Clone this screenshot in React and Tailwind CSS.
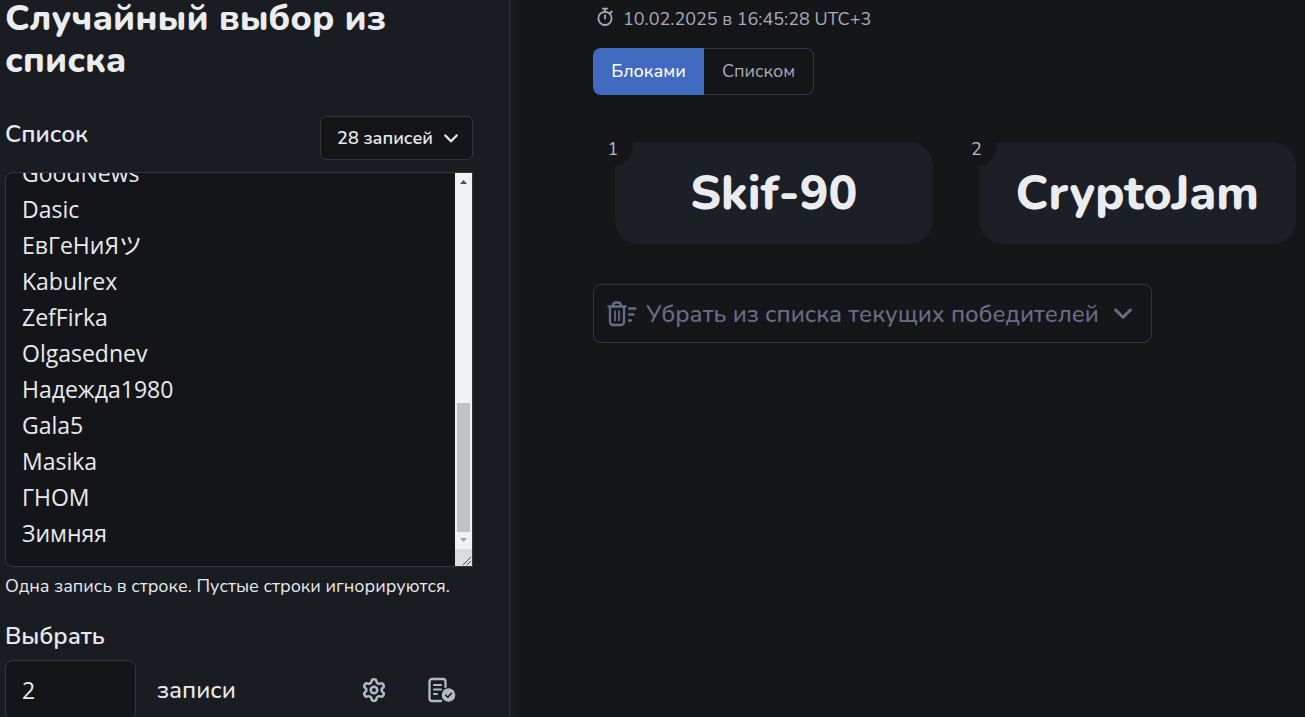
import { useEffect, useRef, useState } from "react"
import { Settings } from "lucide-react"

const names = [
    "GoodNews",
    "Dasic",
    "ЕвГеНиЯツ",
    "Kabulrex",
    "ZefFirka",
    "Olgasednev",
    "Надежда1980",
    "Gala5",
    "Masika",
    "ГНОМ",
    "Зимняя",
]

const winners = ["Skif-90", "CryptoJam"]

function Chevron({ className }) {
    return (
        <svg className={className} viewBox="0 0 14 9" fill="none" stroke="currentColor" strokeWidth="2.3" strokeLinecap="round" strokeLinejoin="round">
            <path d="M1.300 1.500L7 7.200l5.700-5.700" />
        </svg>
    )
}

function StopwatchIcon() {
    return (
        <svg width="18" height="20" viewBox="0 0 18 20" fill="none" stroke="currentColor" strokeWidth="1.8" strokeLinecap="round">
            <circle cx="9" cy="11.4" r="6.6" />
            <path d="M9 8.200v3.400M6.800 1.600h4.400M9 1.800v2.600M14.200 6l1.600-1.500" />
        </svg>
    )
}

function ListCheckIcon() {
    return (
        <svg width="28" height="26" viewBox="0 0 28 26" fill="none">
            <path
                d="M17.500 10V4.500a2.500 2.500 0 0 0-2.500-2.500H4A2.500 2.500 0 0 0 1.500 4.500v17A2.500 2.500 0 0 0 4 24h9"
                stroke="currentColor"
                strokeWidth="2.300"
                strokeLinecap="round"
            />
            <path d="M6 8h7M6 12.500h7M6 17h3" stroke="currentColor" strokeWidth="2.200" strokeLinecap="round" />
            <circle cx="20.500" cy="18" r="6.800" fill="currentColor" />
            <path d="M17.800 18.200l2 2 3.500-3.800" stroke="#191c20" strokeWidth="1.600" strokeLinecap="round" strokeLinejoin="round" />
        </svg>
    )
}

function TrashListIcon() {
    return (
        <svg width="30" height="26" viewBox="0 0 30 26" fill="none" stroke="currentColor" strokeWidth="2.3" strokeLinecap="round" strokeLinejoin="round">
            <path d="M1.500 5.500h17M3 5.500V21a3 3 0 0 0 3 3h8a3 3 0 0 0 3-3V5.500" />
            <path d="M5.800 5c.4-2.300 1.400-3.500 3-3.500h2.400c1.600 0 2.600 1.200 3 3.500" />
            <path d="M8 10v9.500M12 10v9.500" strokeWidth="1.700" />
            <path d="M22 7.500h6.500M22 13.500h4.500M22 19.500h2" />
        </svg>
    )
}

function Scrollbar() {
    return (
        <div aria-hidden="true" className="flex w-[17px] shrink-0 flex-col bg-[#f1f1f1]">
            <svg width="17" height="17" viewBox="0 0 17 17">
                <path d="M5 11l3.500-4 3.500 4z" fill="#505050" />
            </svg>
            <div className="flex-[213]" />
            <div className="mx-0.5 flex-[129] bg-[#c1c3c2]" />
            <svg width="17" height="17" viewBox="0 0 17 17">
                <path d="M5 6l3.500 4L12 6z" fill="#a3a3a3" />
            </svg>
            <svg width="17" height="17" viewBox="0 0 17 17">
                <path d="M0 0h17v17H0z" fill="#dcdcdc" />
                <path d="M8 16l8-8M12 16l4-4" stroke="#505050" />
            </svg>
        </div>
    )
}

function Sidebar() {
    const [list, setList] = useState(names.join("\n"))
    const [count, setCount] = useState(2)
    const listRef = useRef(null)

    useEffect(() => {
        listRef.current.scrollTop = listRef.current.scrollHeight
    }, [])

    return (
        <aside className="w-[510px] shrink-0 border-r border-[#2c3035] bg-[#191c20] pl-[5px] pr-9">
            <h1 className="-mt-0.5 text-4xl font-extrabold leading-[42px] text-[#ebecf0]">Случайный выбор из списка</h1>

            <div className="mt-[34px] flex items-center justify-between">
                <label htmlFor="list" className="pb-2 text-2xl font-semibold">Список</label>
                <button className="flex h-11 items-center gap-[11px] rounded-md border border-[#33373c] bg-[#141519] pl-4 pr-3.5 text-lg font-semibold">
                    28 записей
                    <Chevron className="w-3.5" />
                </button>
            </div>

            <div className="mt-3 flex h-[395px] overflow-hidden rounded-l-lg border border-[#33373c] bg-[#141519]">
                <textarea
                    id="list"
                    ref={listRef}
                    value={list}
                    onChange={(e) => setList(e.target.value)}
                    spellCheck={false}
                    className="min-w-0 flex-1 resize-none overflow-y-auto bg-transparent px-4 py-[15px] font-['Open_Sans','Noto_Sans_CJK_JP',sans-serif] text-[23px] leading-9 outline-none [scrollbar-width:none]"
                />
                <Scrollbar />
            </div>
            <p className="mt-1.5 whitespace-nowrap text-lg leading-[26px]">Одна запись в строке. Пустые строки игнорируются.</p>

            <label htmlFor="count" className="mt-[21px] block text-2xl leading-8 font-semibold">Выбрать</label>
            <div className="mt-2 flex items-center">
                <input
                    id="count"
                    type="number"
                    value={count}
                    onChange={(e) => setCount(e.target.value)}
                    className="h-[60px] w-[131px] rounded-lg border border-[#33373c] bg-[#141519] px-4 font-['Open_Sans',sans-serif] text-[23px] outline-none [appearance:textfield]"
                />
                <span className="ml-[21px] text-2xl font-medium">записи</span>
                <div className="ml-auto flex gap-[41px] pr-[17px] text-[#b4b9c6]">
                    <button aria-label="Настройки"><Settings size={26} strokeWidth={2.3} /></button>
                    <button aria-label="Проверить список"><ListCheckIcon /></button>
                </div>
            </div>
        </aside>
    )
}

function App() {
    const [view, setView] = useState("blocks")

    return (
        <div className="flex h-screen overflow-hidden bg-[#14161a] font-['Nunito','Open_Sans',sans-serif] text-[#e8eaee]">
            <Sidebar />
            <div className="w-3 shrink-0 bg-linear-to-r from-[#1b1c20] to-[#14161a]" />
            <main className="min-w-0 flex-1 pl-[71px] pr-[9px] pt-[5px]">
                <div className="flex h-7 items-center gap-[9px] text-lg text-[#a9adb6]">
                    <span className="pb-1 pl-[3px]"><StopwatchIcon /></span>
                    <time dateTime="2025-02-10T16:45:28+03:00">10.02.2025 в 16:45:28 UTC+3</time>
                </div>

                <div className="mt-[15px] flex h-[47px] w-fit text-lg">
                    <button
                        aria-pressed={view === "blocks"}
                        onClick={() => setView("blocks")}
                        className="w-[111px] rounded-l-lg bg-[#4069c0] pb-0.5 font-medium text-white"
                    >
                        Блоками
                    </button>
                    <button
                        aria-pressed={view === "list"}
                        onClick={() => setView("list")}
                        className="w-[110px] rounded-r-lg border border-l-0 border-[#33373c] pb-0.5 text-[#a9adb6]"
                    >
                        Списком
                    </button>
                </div>

                <ol className="ml-[22px] mt-[47px] grid grid-cols-2 gap-[46px]">
                    {winners.map((name, i) => (
                        <li key={name} className="relative flex h-[102px] items-center justify-center rounded-3xl bg-[#1c1f26]">
                            <span className="absolute -left-[22px] -top-4 flex size-10 items-end justify-center rounded-full bg-[#14161a] pb-[3px] text-lg text-[#b4b9c6]">
                                {i + 1}
                            </span>
                            <span className="text-5xl font-extrabold text-[#ebecf0]">{name}</span>
                        </li>
                    ))}
                </ol>

                <button className="mt-10 flex h-[59px] items-center gap-[9px] whitespace-nowrap rounded-lg border border-[#33373c] pl-[13px] pr-[19px] text-2xl font-medium text-[#666e84]">
                    <TrashListIcon />
                    Убрать из списка текущих победителей
                    <Chevron className="ml-1.5 w-[18px]" />
                </button>
            </main>
        </div>
    )
}

export default App
